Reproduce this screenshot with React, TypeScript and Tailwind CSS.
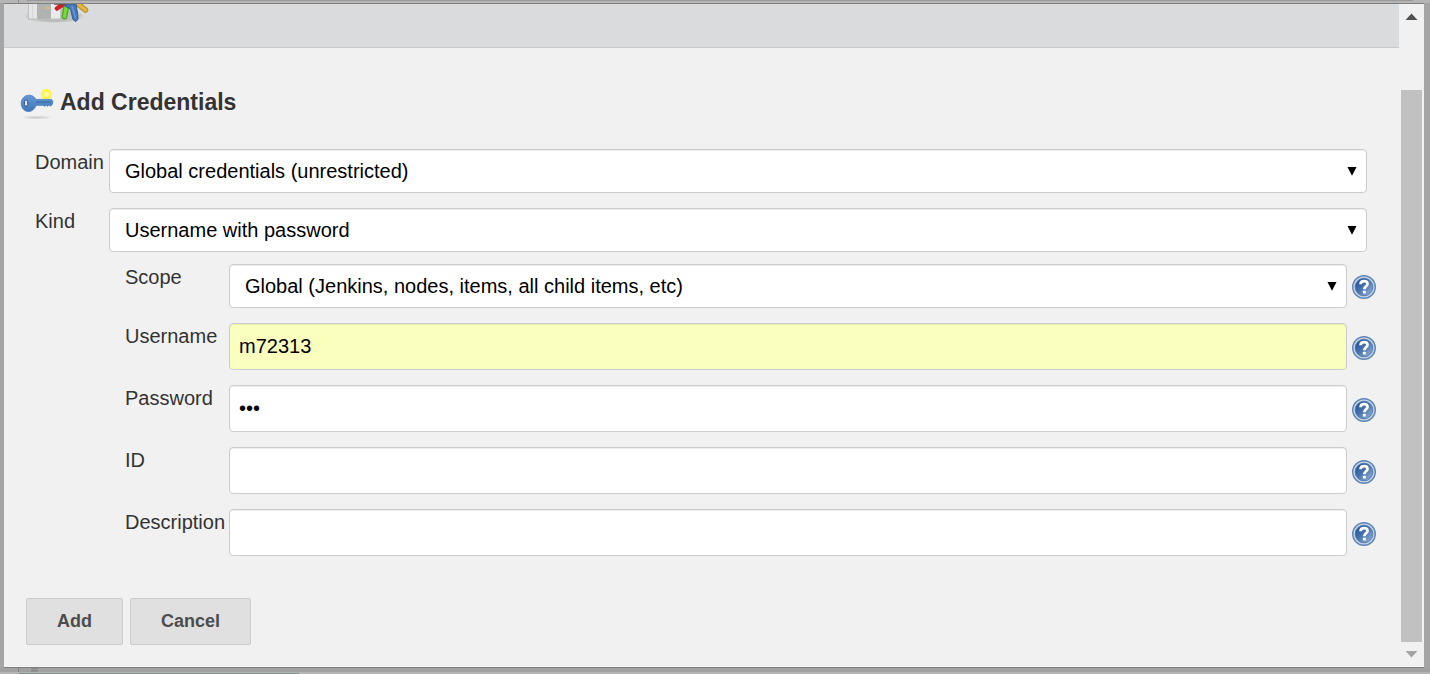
import React from "react";

const fieldBase =
  "block w-full rounded border border-[#cccccc] text-[20px] text-black shadow-[inset_0_1px_1px_rgba(0,0,0,0.075)] outline-none focus:border-[#66afe9]";

function HelpIcon() {
  return (
    <svg viewBox="0 0 24 24" className="size-6" aria-hidden="true">
      <defs>
        <linearGradient id="help-fill" x1="0" y1="0" x2="1" y2="1">
          <stop offset="0" stopColor="#1f4a8c" />
          <stop offset="0.45" stopColor="#4671ad" />
          <stop offset="1" stopColor="#9db8da" />
        </linearGradient>
      </defs>
      <circle cx="12" cy="12" r="11.3" fill="#c3d2e4" stroke="#5f86b8" strokeWidth="1.4" />
      <circle cx="12" cy="12" r="8.8" fill="url(#help-fill)" stroke="#4a72a8" strokeWidth="0.8" />
      <path
        d="M8.500 9.200C8.600 7 10.100 6.100 12.100 6.100C14.200 6.100 15.500 7.200 15.500 8.900C15.500 11.300 12.300 11.300 12.300 14.300"
        fill="none"
        stroke="#ffffff"
        strokeWidth="2.7"
      />
      <rect x="10.900" y="15.700" width="2.900" height="2.900" rx="0.500" fill="#ffffff" />
    </svg>
  );
}

function HelpButton({ topic }: { topic: string }) {
  return (
    <button type="button" aria-label={`Help for ${topic}`} className="shrink-0 cursor-pointer pt-[2px]">
      <HelpIcon />
    </button>
  );
}

function SelectBox({ id, options }: { id: string; options: string[] }) {
  return (
    <div className="relative min-w-0 flex-1">
      <select id={id} className={`${fieldBase} h-11 appearance-none bg-white pr-8 pl-[15px]`}>
        {options.map((option) => (
          <option key={option}>{option}</option>
        ))}
      </select>
      <svg
        viewBox="0 0 10 9"
        className="pointer-events-none absolute top-[18px] right-[10px] h-[9px] w-[10px]"
        aria-hidden="true"
      >
        <path d="M0.500 0H9.500L5 8.700Z" fill="#000000" />
      </svg>
    </div>
  );
}

function CredentialRow({
  id,
  label,
  children,
}: {
  id: string;
  label: string;
  children: React.ReactNode;
}) {
  return (
    <div className="flex items-start">
      <label htmlFor={id} className="w-[104px] shrink-0 leading-[26px]">
        {label}
      </label>
      <div className="flex min-w-0 flex-1 items-center gap-[5px]">
        {children}
        <HelpButton topic={label} />
      </div>
    </div>
  );
}

function KeyIcon() {
  return (
    <svg viewBox="0 0 36 34" className="h-[34px] w-9 shrink-0" aria-hidden="true">
      <defs>
        <linearGradient id="key-fill" x1="0" y1="0" x2="0" y2="1">
          <stop offset="0" stopColor="#6598d3" />
          <stop offset="1" stopColor="#3f76b8" />
        </linearGradient>
        <radialGradient id="key-shadow">
          <stop offset="0" stopColor="#cbcbcb" />
          <stop offset="0.600" stopColor="#dcdcdc" />
          <stop offset="1" stopColor="#f1f1f1" />
        </radialGradient>
      </defs>
      <ellipse cx="17" cy="29.500" rx="15.500" ry="2" fill="url(#key-shadow)" />
      <circle cx="26.500" cy="6.300" r="4" fill="#fff9a0" stroke="#fff34e" strokeWidth="3" />
      <path
        d="M9 7.200C12.200 7.200 14.600 8.800 15.800 11.400H31.500L33 13.500L32.200 16.500L30.500 18.200L29 17L27.500 18.300L26 17.200L24.500 18.300L23 17.300H16.200C15 20.500 12.300 23.500 8.800 23.500C4.200 23.500 1.200 19.800 1.200 15.400C1.200 10.900 4.500 7.200 9 7.200Z"
        fill="url(#key-fill)"
        stroke="#5585bf"
        strokeWidth="0.900"
      />
      <path d="M16 14H31" stroke="#3767a3" strokeWidth="1" />
      <rect x="4.500" y="12.200" width="3.200" height="5.800" rx="1.300" fill="#dfe6ed" stroke="#31567f" strokeWidth="1" />
    </svg>
  );
}

function CredentialsLogo() {
  return (
    <svg viewBox="0 0 72 20" className="h-5 w-[72px]" aria-hidden="true">
      <defs>
        <radialGradient id="logo-shadow">
          <stop offset="0" stopColor="#a9aaac" />
          <stop offset="0.750" stopColor="#b9babc" />
          <stop offset="1" stopColor="#dadbdd" />
        </radialGradient>
      </defs>
      <ellipse cx="34" cy="12" rx="30" ry="7" fill="url(#logo-shadow)" />
      <rect x="8" y="0" width="48" height="16" fill="#bfc0c0" />
      <rect x="9" y="0" width="8" height="14.500" fill="#e6e6e6" />
      <path d="M12.500 0V14.500" stroke="#d6d6d6" strokeWidth="1" />
      <rect x="17" y="0" width="14" height="15" fill="#b0b3b1" />
      <rect x="31" y="0" width="9" height="14.500" fill="#ebebeb" />
      <rect x="26" y="3" width="4" height="2" rx="1" fill="#d4c276" />
      <path d="M37 4.500L41 1.500H43" fill="none" stroke="#cf2029" strokeWidth="4.500" strokeLinecap="round" />
      <path d="M34 0H44" stroke="#6c4a50" strokeWidth="1.500" />
      <path d="M46 4L44.500 12.500" stroke="#55a825" strokeWidth="6" strokeLinecap="round" />
      <path d="M46 4L44.500 12.500" stroke="#73dc3a" strokeWidth="3.200" strokeLinecap="round" />
      <path d="M58 0L65.500 6" stroke="#bb942b" strokeWidth="5.500" strokeLinecap="round" />
      <path d="M58 0L65.500 6" stroke="#e3b640" strokeWidth="3.200" strokeLinecap="round" />
      <path d="M49 0H56L57.500 9L58 15.500L55.500 17.500L53 15.500L50.500 5L45 2V0Z" fill="#4479ba" stroke="#315d9a" strokeWidth="1" />
      <path d="M52 2L55.500 14" stroke="#6698d1" strokeWidth="1.600" />
    </svg>
  );
}

function ScrollTrack() {
  return (
    <div className="flex w-[25px] shrink-0 flex-col bg-[#f1f1f1]" aria-hidden="true">
      <svg viewBox="0 0 25 26" className="h-[26px] w-[25px]">
        <path d="M6.500 16L12.500 9.500L18.500 16Z" fill="#505050" />
      </svg>
      <div className="mx-[2px] mt-[60px] flex-1 bg-[#c1c1c1]" />
      <svg viewBox="0 0 25 25" className="h-[25px] w-[25px]">
        <path d="M6.500 9L12.500 15.500L18.500 9Z" fill="#a3a3a3" />
      </svg>
    </div>
  );
}

const buttonBase =
  "h-[47px] cursor-pointer rounded-[2px] border border-[#cccccc] bg-[#e0e0e0] px-[30px] text-[18px] font-bold text-[#4d4d4d] hover:bg-[#d5d5d5]";

export default function App() {
  return (
    <div className="flex min-h-screen flex-col bg-[#a5a5a5] font-['Liberation_Sans',Arial,sans-serif] text-[20px] text-[#333333]">
      <div className="flex h-[3px] shrink-0 bg-[#b5b5b5] pr-[17px] pl-[18px]">
        <div className="w-px bg-[#8f8f8f]" />
        <div className="ml-2 h-px flex-1 bg-[#989898]" />
      </div>
      <div
        role="dialog"
        aria-labelledby="dialog-title"
        className="mr-[6px] ml-1 flex flex-1 border-y border-[#808080] bg-[#f1f1f1]"
      >
        <div className="flex min-w-0 flex-1 flex-col">
          <header className="h-11 border-b border-[#c8c9cb] bg-[#dadbdd] pl-4">
            <CredentialsLogo />
          </header>

          <form className="flex flex-1 flex-col pt-10 pr-[23px] pl-4" onSubmit={(e) => e.preventDefault()}>
            <h1 id="dialog-title" className="flex items-start gap-1 text-[23px] leading-[28px] font-bold">
              <KeyIcon />
              Add Credentials
            </h1>

            <div className="mt-[27px] flex flex-col gap-[15px] pr-[9px] pl-[15px]">
              <div className="flex items-start">
                <label htmlFor="domain" className="w-[74px] shrink-0 leading-[26px]">
                  Domain
                </label>
                <SelectBox id="domain" options={["Global credentials (unrestricted)"]} />
              </div>
              <div className="flex items-start">
                <label htmlFor="kind" className="w-[74px] shrink-0 leading-[26px]">
                  Kind
                </label>
                <SelectBox
                  id="kind"
                  options={["Username with password", "SSH Username with private key", "Secret text"]}
                />
              </div>
            </div>

            <div className="mt-3 flex flex-col gap-[15px] pl-[105px]">
              <CredentialRow id="scope" label="Scope">
                <SelectBox
                  id="scope"
                  options={["Global (Jenkins, nodes, items, all child items, etc)", "System (Jenkins and nodes only)"]}
                />
              </CredentialRow>
              <CredentialRow id="username" label="Username">
                <input
                  id="username"
                  type="text"
                  defaultValue="m72313"
                  className={`${fieldBase} h-[47px] min-w-0 flex-1 bg-[#faffbd] px-[9px]`}
                />
              </CredentialRow>
              <CredentialRow id="password" label="Password">
                <input
                  id="password"
                  type="password"
                  defaultValue="abc"
                  className={`${fieldBase} h-[47px] min-w-0 flex-1 bg-white px-[9px]`}
                />
              </CredentialRow>
              <CredentialRow id="credential-id" label="ID">
                <input
                  id="credential-id"
                  type="text"
                  className={`${fieldBase} h-[47px] min-w-0 flex-1 bg-white px-[9px]`}
                />
              </CredentialRow>
              <CredentialRow id="description" label="Description">
                <input
                  id="description"
                  type="text"
                  className={`${fieldBase} h-[47px] min-w-0 flex-1 bg-white px-[9px]`}
                />
              </CredentialRow>
            </div>

            <div className="mt-[42px] flex gap-[7px] pb-5 pl-[6px]">
              <button type="submit" className={buttonBase}>
                Add
              </button>
              <button type="button" className={buttonBase}>
                Cancel
              </button>
            </div>
          </form>
        </div>
        <ScrollTrack />
      </div>
      <div className="flex h-[6px] shrink-0 flex-col bg-[#a1a1a1]">
        <div className="flex h-1 pl-[18px]">
          <div className="w-px bg-[#808080]" />
          <div className="ml-3 w-[7px] bg-[#8f8f8f]" />
        </div>
        <div className="h-[2px] bg-[#b4b4b4] pt-px pl-[19px]">
          <div className="h-px w-[280px] bg-[#7f8f8c]" />
        </div>
      </div>
    </div>
  );
}
